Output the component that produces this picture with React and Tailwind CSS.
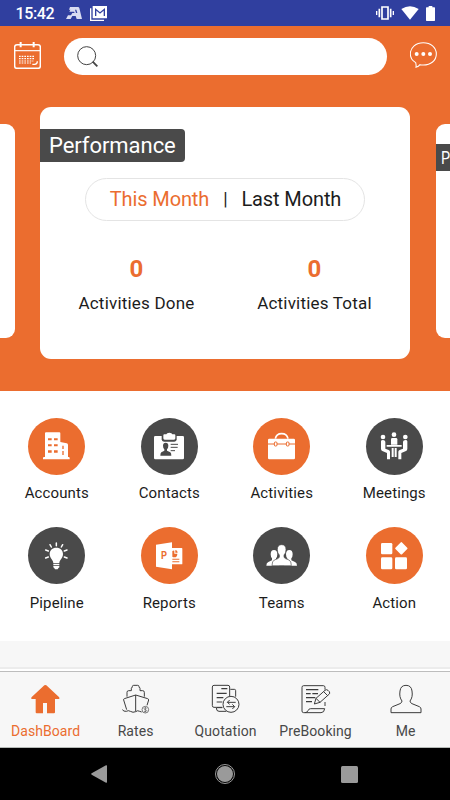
import React, { useState } from 'react';

/* status bar */

const StatusBar = () => (
  <div className="h-[26px] bg-[#303f9f] flex items-center pl-[15.5px] pr-[15px] text-white">
    <span className="text-[16px] leading-[26px] font-medium tracking-[-0.35px] w-[40px] pt-[2px]">15:42</span>
    <svg className="ml-[10.5px] w-[16px] h-[12px]" viewBox="0 0 48 36" fill="#d9dcf1">
      <path d="M12 0h24q3 0 4 3l8 33H32l-3-9H19l-5 9H0l6-11h9l4-7h7l-2-4H10l3-6h14l3 10h4l-3-10H9z" />
    </svg>
    <svg className="ml-[8px] w-[17px] h-[15px]" viewBox="0 0 51 45" fill="none" stroke="#fff" strokeWidth="4">
      <path d="M2 7v36h40" />
      <path d="M10 2h39v33H10z" fill="#fff" />
      <path d="M17 30V10l13 11 13-11v20" stroke="#303f9f" strokeWidth="4" />
    </svg>
    <div className="grow" />
    <svg className="w-[18px] h-[14px]" viewBox="0 0 54 42" fill="none" stroke="#fff" strokeWidth="5">
      <path d="M18 3h18v36H18zM10 8v26M44 8v26" />
      <path d="M2 15v12M52 15v12" strokeWidth="4" />
    </svg>
    <svg className="ml-[7px] w-[18px] h-[14px]" viewBox="0 0 54 42" fill="#fff">
      <path d="M1 9Q27-8 53 9L27 41z" />
    </svg>
    <svg className="ml-[7px] w-[9px] h-[15px]" viewBox="0 0 27 45" fill="#fff">
      <path d="M8 0h11v4h6q2 0 2 2v37q0 2-2 2H2q-2 0-2-2V6q0-2 2-2h6z" />
    </svg>
  </div>
);

/* header icons */

const CalendarIcon = () => (
  <svg className="w-[27px] h-[27px] -mt-[3px]" viewBox="0 0 81 81" fill="none" stroke="#fff" strokeWidth="4.5">
    <rect x="2" y="8" width="77" height="71" rx="7" />
    <path d="M2 26h77" strokeWidth="3.5" />
    <path d="M20 0v16M59 0v16" strokeWidth="6" />
    <path d="M15 43h48M15 50h48M15 57h43M15 63h36" strokeWidth="3.5" strokeDasharray="5 3" />
    <path d="M55 67h7q8 0 8-9" strokeWidth="4" />
  </svg>
);

const SearchIcon = () => (
  <svg className="w-[21px] h-[21px] -mt-px" viewBox="0 0 63 63" fill="none" stroke="#444">
    <circle cx="29" cy="29" r="27" strokeWidth="3" />
    <path d="M47 47l14 14" strokeWidth="5.5" />
  </svg>
);

const ChatIcon = () => (
  <svg className="w-[27px] h-[27px] -mt-[3px]" viewBox="0 0 81 81" fill="none" stroke="#fff" strokeWidth="3.2">
    <path d="M17 62C7 56 1 47 1 36 1 16 18 2 40 2s39 14 39 34-17 33-39 33q-6 0-10-1-4 6-12 8 1-7-1-14z" />
    <g fill="#fff" stroke="none">
      <circle cx="20" cy="36" r="6" />
      <circle cx="40" cy="36" r="6" />
      <circle cx="60" cy="36" r="6" />
    </g>
  </svg>
);

/* menu icons, drawn on a 171x171 disc */

const OR = '#eb6d2f';
const DK = '#4a4a4a';

const menus = [
  {
    name: 'Accounts',
    type: 'orange',
    icon: (
      <>
        <path d="M51 46q0-3 3-3h40q3 0 3 3v26l19 4q4 1 4 5v36h2q3 0 3 3v4H45v-4q0-3 3-3h3z" />
        <path d="M60 61h11v6H60zM78 61h11v6H78zM60 79h11v6H60zM78 79h11v6H78zM60 97h11v7H60zM78 97h11v7H78zM103 83h4v10h-4zM103 99h4v12h-4z" fill={OR} />
      </>
    ),
  },
  {
    name: 'Contacts',
    type: 'dark',
    icon: (
      <>
        <rect x="39" y="54" width="90" height="70" rx="4" />
        <path d="M62 54v10q0 7 7 7h31q7 0 7-7V54z" fill={DK} />
        <path d="M67 52q0-3 3-3h6q1-5 9-5t9 5h6q3 0 3 3v9q0 4-4 4H71q-4 0-4-4z" />
        <path d="M66 83q0-9 8-9t8 9q0 7-4 11v4l10 5q3 2 3 10H58q0-8 3-10l9-5v-4q-4-4-4-11z" fill={DK} />
        <path d="M89 79h22M89 88h21M89 98h13" stroke={DK} strokeWidth="3" />
      </>
    ),
  },
  {
    name: 'Activities',
    type: 'orange',
    icon: (
      <>
        <path d="M67 62q3-15 19-15t19 15" fill="none" stroke="#fff" strokeWidth="5" />
        <rect x="45" y="62" width="81" height="62" rx="4" />
        <path d="M45 78h81" stroke={OR} strokeWidth="3" />
        <rect x="64" y="72" width="8" height="12" rx="3" stroke={OR} strokeWidth="3" />
        <rect x="100" y="72" width="8" height="12" rx="3" stroke={OR} strokeWidth="3" />
      </>
    ),
  },
  {
    name: 'Meetings',
    type: 'dark',
    icon: (
      <>
        <circle cx="84" cy="50" r="7" />
        <circle cx="51" cy="57" r="7" />
        <circle cx="118" cy="57" r="7" />
        <path d="M75 64q0-4 4-4h11q4 0 4 4v16H75z" />
        <path d="M62 81h45v5H62zM77 90h6v27h-6zM86 90h6v27h-6z" />
        <path d="M45 70q0-4 6-4t7 5v21l10 4q4 2 4 5v23h-9v-19l-14-6q-4-2-4-7zM124 70q0-4-6-4t-7 5v21l-10 4q-4 2-4 5v23h9v-19l14-6q4-2 4-7z" />
      </>
    ),
  },
  {
    name: 'Pipeline',
    type: 'dark',
    icon: (
      <>
        <path d="M85 62c12 0 20 8 20 19 0 13-11 17-11 28H76c0-11-11-15-11-28 0-11 8-19 20-19z" />
        <path d="M76 111h18v4H76zM76 117h18v4q-3 2-5 6h-8q-2-4-5-6z" />
        <path d="M85 48v8M66 53l4 7M104 53l-4 7M53 69l8 3M117 69l-8 3M53 93l8-3M117 93l-8-3" stroke="#fff" strokeWidth="4.5" strokeLinecap="round" />
      </>
    ),
  },
  {
    name: 'Reports',
    type: 'orange',
    icon: (
      <>
        <rect x="90" y="63" width="34" height="49" rx="2" />
        <path d="M45 53l48-7v81l-48-8z" />
        <path d="M94 72q5-3 6-1v9h9q0 11-9 11-4 0-6-2zM103 69q7 1 7 8h-7zM94 95h21v3H94zM94 103h21v3H94z" fill={OR} />
        <text x="60" y="97" fontSize="30" fontWeight="700" fill={OR} fontFamily="Roboto, sans-serif" textLength="18" lengthAdjust="spacingAndGlyphs">P</text>
      </>
    ),
  },
  {
    name: 'Teams',
    type: 'dark',
    icon: (
      <>
        <path d="M53 82q0-13 10-13t10 13q0 8-4 12v6l10 16H40q0-9 6-11l11-5v-6q-4-4-4-12zM119 82q0-13-10-13T99 82q0 8 4 12v6l-10 16h39q0-9-6-11l-11-5v-6q4-4 4-12z" />
        <path d="M73 68q0-15 13-15t13 15q0 11-6 16v7q2 4 15 8 7 3 7 17H57q0-14 7-17 13-4 15-8v-7q-6-5-6-16z" stroke={DK} strokeWidth="2" />
      </>
    ),
  },
  {
    name: 'Action',
    type: 'orange',
    icon: (
      <>
        <rect x="45" y="48" width="34" height="34" rx="4" />
        <rect x="45" y="91" width="34" height="36" rx="4" />
        <rect x="87" y="91" width="36" height="36" rx="4" />
        <rect x="92" y="50" width="28" height="28" rx="3" transform="rotate(45 106 64)" />
      </>
    ),
  },
];

const MenuItem = ({ item }) => (
  <div className="flex flex-col items-center">
    <div
      className={`w-[57px] h-[57px] rounded-full ${item.type === 'orange' ? 'bg-[#eb6d2f]' : 'bg-[#4a4a4a]'}`}
    >
      <svg className="w-[57px] h-[57px]" viewBox="0 0 171 171" fill="#fff">
        {item.icon}
      </svg>
    </div>
    <p className="mt-[7.75px] text-[15px] leading-[22px] tracking-[0.12px] text-[#1c1c1c]">{item.name}</p>
  </div>
);

/* bottom tabs */

const tabs = [
  {
    name: 'DashBoard',
    icon: (
      <path
        d="M43 4q3-2 6 0l37 34q5 5 0 7H75v40q0 3-3 3H51V57H39v31H20q-3 0-3-3V45H6q-5-2 0-7z"
        fill={OR}
        stroke="none"
      />
    ),
  },
  {
    name: 'Rates',
    icon: (
      <>
        <path d="M21 38V25q0-5 5-5h8v-7q0-3 3-3v-2q0-4 4-4h12q4 0 4 4v2q3 0 3 3v7h8q5 0 5 5v13" />
        <path d="M20 77l-9-29q-1-3 2-4l34-11 36 11q3 1 3 4l-5 16M47 33v49" />
        <path d="M7 77q4 6 12 5 6-4 12 0 8 5 16 1 6-5 12-1l6 2" />
        <circle cx="76" cy="77" r="10" strokeWidth="2" />
        <path d="M80 73q-7-4-8 1 1 3 4 3t4 3q-1 5-8 2M76 69v16" strokeWidth="1.6" />
      </>
    ),
  },
  {
    name: 'Quotation',
    icon: (
      <>
        <path d="M37 70H12q-5 0-5-5V9q0-5 5-5h42q5 0 5 5v27M61 16h12q4 0 4 4v18M19 72q0 10 8 10h22M21 71h16" />
        <path d="M34 14h18M20 28h30M20 41h20M20 54h17" strokeWidth="3.4" />
        <circle cx="63" cy="61" r="24" />
        <path d="M77 55H52l7-7M52 55l7 6M49 68h25l-7-7M74 68l-7 7" />
      </>
    ),
  },
  {
    name: 'PreBooking',
    icon: (
      <>
        <path d="M75 17V10q0-5-5-5H11q-5 0-5 5v71q0 5 5 5h52q10 0 11-12H32q-6 0-8 6-3 6-9 6M75 54v12" />
        <path d="M18 17h37M18 29h14M37 29h17M18 41h28M18 53h18" strokeWidth="3.4" />
        <path d="M43 60l5-17 27-24q4-4 9 0l4 4q3 5-1 8L60 55zM48 43l12 12M71 23l12 12" />
      </>
    ),
  },
  {
    name: 'Me',
    icon: (
      <path d="M3 86V75q0-5 5-7l22-9q6-3 6-8c-6-8-8-17-6-30Q32 4 48 4t18 17c2 13 0 22-6 30q0 5 6 8l22 9q5 2 5 7v11z" />
    ),
  },
];

const TabBar = ({ active, onChange }) => (
  <div className="h-[76px] bg-[#f7f7f7] border-t border-[#bdbdbd] grid grid-cols-5">
    {tabs.map((tab) => (
      <button
        key={tab.name}
        onClick={() => onChange(tab.name)}
        className="flex flex-col items-center pt-[12px] cursor-pointer"
      >
        <svg
          className="w-[30px] h-[30px] overflow-visible"
          viewBox="0 0 90 90"
          fill="none"
          stroke="#3c3c3c"
          strokeWidth="3"
        >
          {tab.icon}
        </svg>
        <span
          className={`mt-[7px] pl-[1.2px] text-[14px] leading-[20px] tracking-[0.08px] whitespace-nowrap ${
            active === tab.name ? 'text-[#eb6d2f]' : 'text-[#484848]'
          }`}
        >
          {tab.name}
        </span>
      </button>
    ))}
  </div>
);

const Count = ({ value, label }) => (
  <div className="w-[178px] flex flex-col items-center">
    <span className="text-[24px] leading-[28px] font-bold text-[#eb6d2f]">{value}</span>
    <span className="mt-[9px] text-[17px] leading-[22px] tracking-[0.2px] text-[#1c1c1c]">{label}</span>
  </div>
);

const PerformanceCard = () => {
  const [month, setMonth] = useState('this');

  return (
    <div className="shrink-0 w-[370px] h-[252px] bg-white rounded-[11px] pt-[22px] flex flex-col items-center">
      <div className="self-start w-[144.5px] h-[33px] bg-[#4a4a4a] rounded-r-[4px] pl-[9px] text-[22px] leading-[33px] tracking-[-0.05px] text-white">
        Performance
      </div>
      <div className="mt-[16px] w-[280px] h-[43px] rounded-full border border-[#e4e4e4] flex items-center justify-center gap-[14px] pl-[1px] pb-[2px] text-[20px] leading-[28px] tracking-[-0.12px] text-[#1c1c1c]">
        <button className={month === 'this' ? 'text-[#eb6d2f]' : ''} onClick={() => setMonth('this')}>
          This Month
        </button>
        <span className="text-[18px]">|</span>
        <button className={month === 'last' ? 'text-[#eb6d2f]' : ''} onClick={() => setMonth('last')}>
          Last Month
        </button>
      </div>
      <div className="mt-[34px] flex pl-[1px]">
        <Count value={0} label="Activities Done" />
        <Count value={0} label="Activities Total" />
      </div>
    </div>
  );
};

const App = () => {
  const [active, setActive] = useState('DashBoard');

  return (
    <div className="w-[450px] h-[800px] overflow-hidden bg-white flex flex-col font-['Roboto',sans-serif]">
      <StatusBar />

      <div className="h-[365px] bg-[#eb6d2f]">
        <div className="pt-[12px] pl-[14px] pr-[13px] flex items-center">
          <CalendarIcon />
          <div className="ml-[22.5px] w-[323.5px] h-[37px] bg-white rounded-full flex items-center pl-[13px]">
            <SearchIcon />
          </div>
          <div className="grow" />
          <ChatIcon />
        </div>
        <div className="mt-[32px] flex items-start overflow-hidden">
          <div className="shrink-0 w-[15px] h-[214px] mt-[17px] bg-white rounded-r-[9px] mr-[25px]" />
          <PerformanceCard />
          <div className="shrink-0 w-[14px] h-[214px] mt-[17px] bg-white rounded-l-[9px] ml-[26px] pt-[20px]">
            <div className="h-[27px] bg-[#4a4a4a] pl-[4.5px] text-[18px] leading-[27px] text-white">
              <span className="block w-[11px] origin-left scale-x-[0.8]">P</span>
            </div>
          </div>
        </div>
      </div>

      <div className="h-[250px] pt-[26.5px] pl-[0.5px] grid grid-cols-[112.5px_112.5px_112.5px_112.5px] grid-rows-[109.5px_109.5px]">
        {menus.map((item) => (
          <MenuItem key={item.name} item={item} />
        ))}
      </div>

      <div className="h-[26px] bg-[#f7f7f7]" />
      <div className="h-[4px] bg-white border-t-2 border-[#ececec]" />
      <TabBar active={active} onChange={setActive} />
      <div className="h-px bg-[#b5bab7]" />

      {/* system navigation */}
      <div className="grow bg-black flex items-center pl-[91px] text-[#9a9a9a]">
        <svg className="w-[16px] h-[18px]" viewBox="0 0 48 54" fill="currentColor">
          <path d="M45 1q3-1 3 2v48q0 3-3 2L2 29q-3-2 0-4z" />
        </svg>
        <svg className="ml-[108px] w-[20px] h-[20px]" viewBox="0 0 60 60" fill="currentColor">
          <circle cx="30" cy="30" r="28.5" fill="none" stroke="currentColor" strokeWidth="3" />
          <circle cx="30" cy="30" r="24" />
        </svg>
        <div className="ml-[106px] w-[17px] h-[17px] rounded-[1.5px] bg-[#9a9a9a]" />
      </div>
    </div>
  );
};

export default App;
